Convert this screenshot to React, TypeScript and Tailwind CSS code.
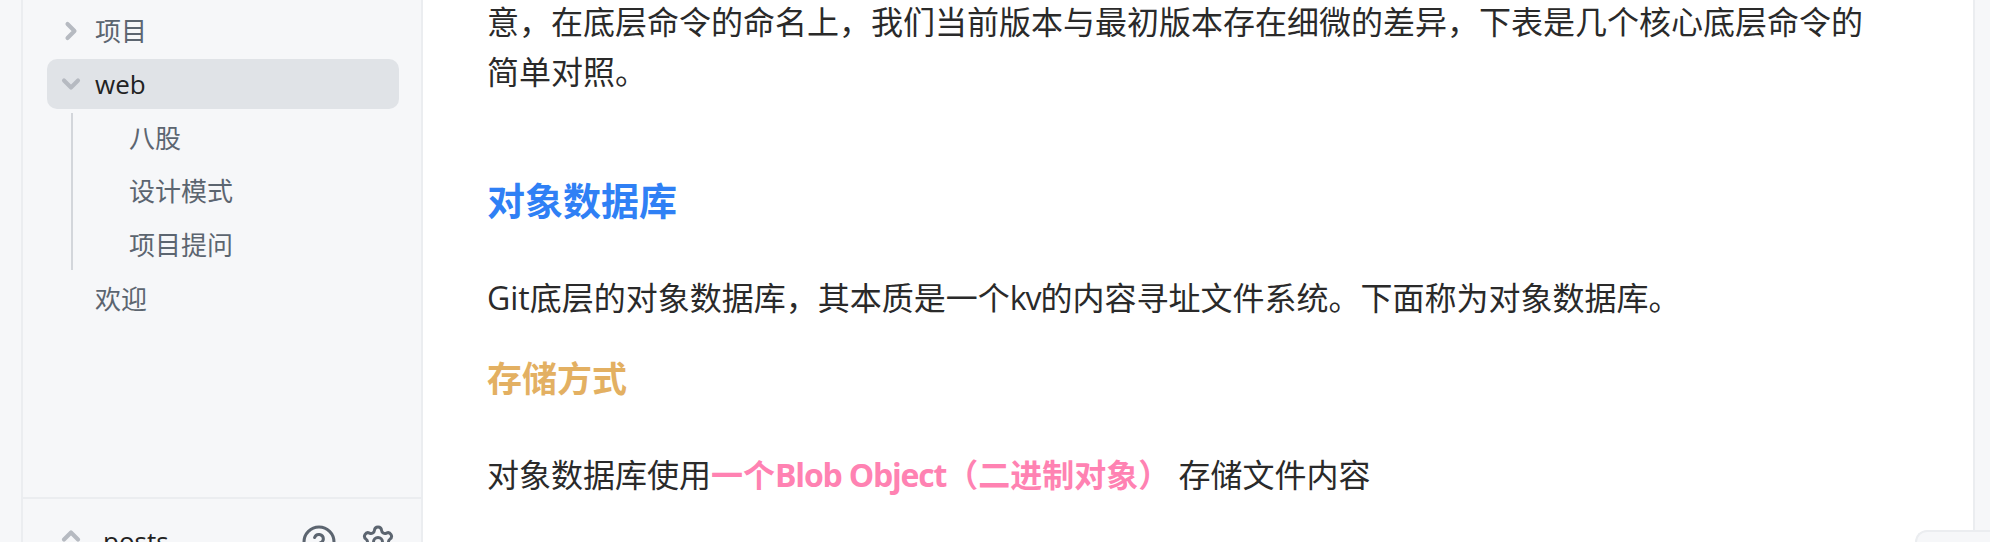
import React from 'react';
import { ChevronDown, ChevronRight, ChevronUp, CircleHelp, Settings } from 'lucide-react';

const cjk = "font-['Open_Sans','Noto_Sans_CJK_SC',sans-serif]";

function SubItem({ label }: { label: string }) {
  return <div className="h-[53.5px] shrink-0 flex items-center pl-[56px] text-[26px] text-[#5c6570]">{label}</div>;
}

export default function App() {
  return (
    <div className={`relative h-[542px] w-full overflow-hidden flex bg-white ${cjk}`}>
      {/* Left strip */}
      <div className="w-[23px] shrink-0 bg-[#f6f7f9] border-r-2 border-[#ebedf0]" />

      {/* Sidebar */}
      <aside className="w-[400px] shrink-0 flex flex-col bg-[#f6f7f9] border-r-2 border-[#ebedf0]">
        <nav className="flex-1 pt-[6px] pl-[24px] pr-[22px]">
          <div className="h-[50px] flex items-center text-[26px] text-[#5c6570]">
            <div className="w-[48px] flex justify-center">
              <ChevronRight size={28} strokeWidth={3.5} className="text-[#b6bac1]" />
            </div>
            项目
          </div>
          <div className="mt-[3px] h-[50px] flex items-center rounded-[10px] bg-[#e0e3e7] text-[26px] text-[#222222]">
            <div className="w-[48px] flex justify-center">
              <ChevronDown size={28} strokeWidth={3.5} className="text-[#b6bac1]" />
            </div>
            web
          </div>
          <div className="mt-[4px] ml-[24px] border-l-2 border-[#d3d6db] h-[157px] flex flex-col">
            <div className="-mt-[1.5px]">
              <SubItem label="八股" />
              <SubItem label="设计模式" />
              <SubItem label="项目提问" />
            </div>
          </div>
          <div className="h-[58px] flex items-center pl-[48px] text-[26px] text-[#5c6570]">欢迎</div>
        </nav>
        <div className="h-[45px] shrink-0 border-t-2 border-[#ebedf0] flex items-start pl-[24px] pr-[25px] pt-[25px]">
          <div className="w-[48px] flex justify-center -mt-[2px]">
            <ChevronUp size={28} strokeWidth={3.5} className="text-[#b6bac1]" />
          </div>
          <span className="ml-[8px] text-[26px] leading-[40px] text-[#222222] -mt-[3px]">posts</span>
          <CircleHelp size={36} strokeWidth={2} className="ml-auto text-[#5c6570] shrink-0" />
          <Settings size={36} strokeWidth={2} className="ml-[23px] text-[#5c6570] shrink-0" />
        </div>
      </aside>

      {/* Article */}
      <main className="flex-1 min-w-0 pl-[64px] pr-[90px] text-[32px] leading-[52px] text-[#2a2a2a]">
        <div className="-mt-[3px]">
          <p className="leading-[50px]">意，在底层命令的命名上，我们当前版本与最初版本存在细微的差异，下表是几个核心底层命令的简单对照。</p>
          <h2 className="mt-[77px] text-[38px] leading-[52px] font-bold text-[#2f80f5]">对象数据库</h2>
          <p className="mt-[46px]">
            Git底层的对象数据库，其本质是一个<span className="tracking-[-1px]">kv</span>的内容寻址文件系统。下面称为对象数据库。
          </p>
          <h3 className="mt-[29px] text-[35px] leading-[52px] font-bold text-[#e3b062]">存储方式</h3>
          <p className="mt-[44px]">
            对象数据库使用
            <strong className="font-bold text-[#ff82b2]">
              一个<span className="tracking-[-1.2px]">Blob Object</span>（二进制对象）
            </strong>{' '}
            存储文件内容
          </p>
        </div>
      </main>

      {/* Right rail */}
      <div className="w-[17px] shrink-0 bg-[#f6f7f9] border-l-2 border-[#ebedf0]" />

      {/* Status bar corner */}
      <div className="absolute right-0 bottom-0 w-[75px] h-[12px] bg-[#f6f7f9] border-l-2 border-t-2 border-[#ebedf0] rounded-tl-[14px]" />
    </div>
  );
}
